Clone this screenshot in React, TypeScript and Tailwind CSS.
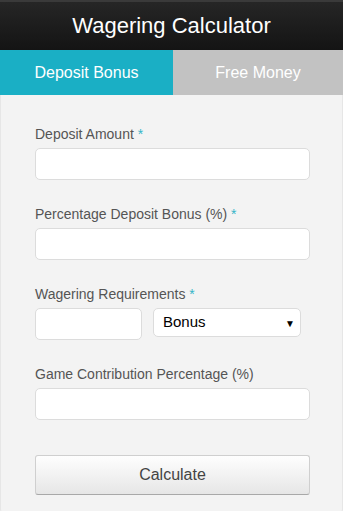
import React from 'react';

const Label = ({ text, required }: { text: string; required?: boolean }) => (
  <label className="block h-5 mb-1 text-[14px] leading-5 text-[#555]">
    {text}
    {required && <span className="text-[#36b5c8]"> *</span>}
  </label>
);

const Input = ({ className = 'w-full' }: { className?: string }) => (
  <input
    type="text"
    className={`${className} h-8 rounded-[5px] border border-[#dcdcdc] bg-white px-2 text-[14px] outline-none`}
  />
);

export default function App() {
  return (
    <div className="w-[343px] h-[511px] overflow-hidden bg-white font-['Liberation_Sans',Arial,sans-serif]">
      <div className="h-[50px] flex items-center justify-center border-t-2 border-[#3a3a3a] bg-gradient-to-b from-[#262626] to-[#141414]">
        <h1 className="text-[22px] text-white leading-none">Wagering Calculator</h1>
      </div>

      <div className="flex h-[45px]">
        <div className="w-[173px] flex items-center justify-center bg-[#1aafc5] text-white text-[16px]">
          Deposit Bonus
        </div>
        <div className="flex-1 flex items-center justify-center bg-[#c2c2c2] text-white text-[16px]">
          Free Money
        </div>
      </div>

      <div className="h-[420px] bg-[#f3f3f3] rounded-b-[6px] border-x border-b border-[#e6e6e6] pl-[34px] pr-[32px] pt-[29px]">
        <Label text="Deposit Amount" required />
        <Input />

        <div className="mt-6">
          <Label text="Percentage Deposit Bonus (%)" required />
          <Input />
        </div>

        <div className="mt-6">
          <Label text="Wagering Requirements" required />
          <div className="flex items-start gap-[11px]">
            <Input className="w-[107px]" />
            <div className="relative w-[148px] h-[29px] rounded-[5px] border border-[#dcdcdc] bg-white flex items-center pl-[9px]">
              <span className="text-[15px] text-black">Bonus</span>
              <span className="absolute right-[5px] top-[7px] text-[10px] text-black">▼</span>
            </div>
          </div>
        </div>

        <div className="mt-6">
          <Label text="Game Contribution Percentage (%)" />
          <Input />
        </div>

        <button className="mt-[35px] w-full h-10 rounded-[3px] border border-[#cfcfcf] border-b-[#a8a8a8] bg-gradient-to-b from-[#fefefe] to-[#e6e6e6] text-[16px] text-[#444]">
          Calculate
        </button>
      </div>
    </div>
  );
}
